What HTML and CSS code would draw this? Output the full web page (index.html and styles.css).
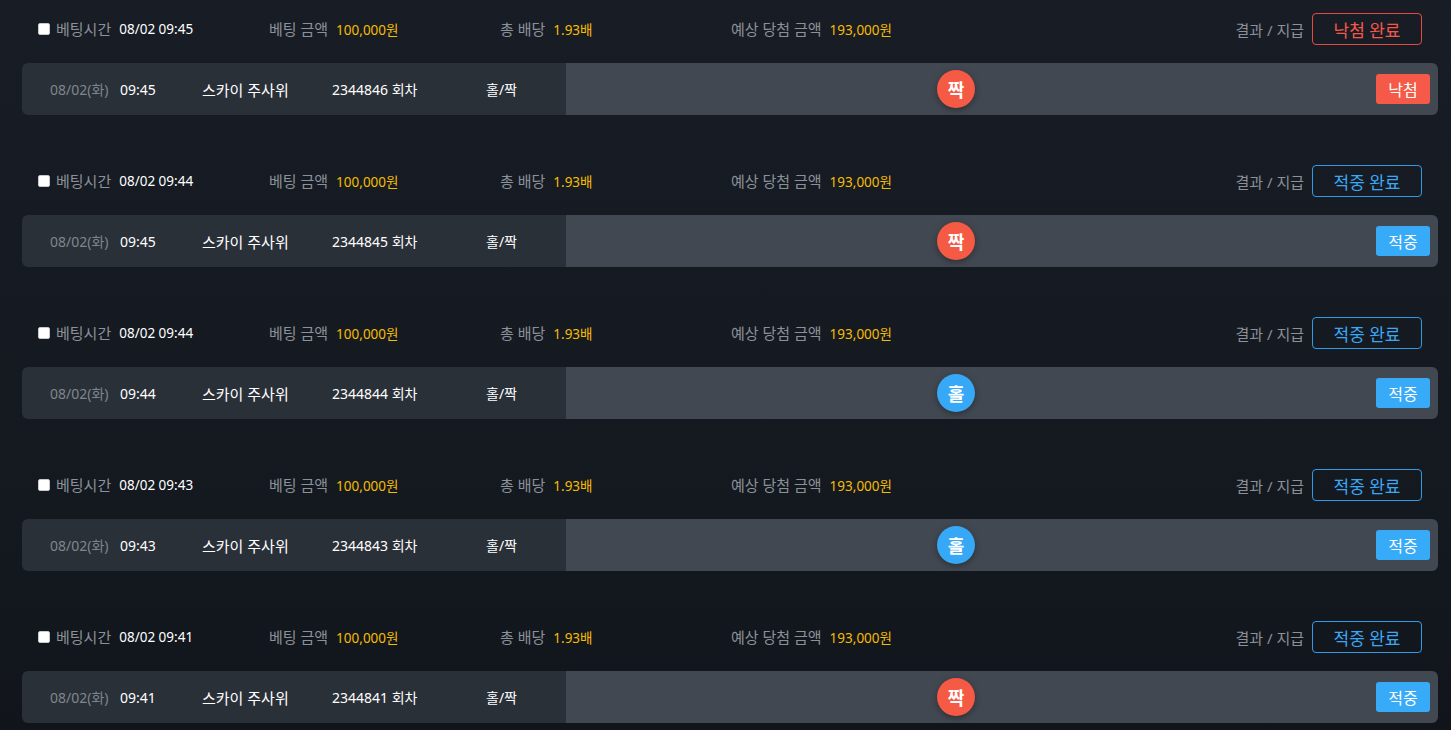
FILE: index.html
```html
<!DOCTYPE html>
<html lang="ko">
<head>
  <meta charset="UTF-8" />
  <meta name="viewport" content="width=device-width, initial-scale=1.0" />
  <title>베팅 내역</title>
  <link rel="stylesheet" href="styles.css" />
</head>
<body>

<main class="bet-list">

  <!-- 2344846 -->
  <section class="bet-item">
    <div class="bet-info">
      <div class="info-cell">
        <input type="checkbox" class="chk" />
        <span class="label">베팅시간</span>
        <span class="value">08/02 09:45</span>
      </div>
      <div class="info-cell">
        <span class="label">베팅 금액</span>
        <span class="value gold">100,000원</span>
      </div>
      <div class="info-cell">
        <span class="label">총 배당</span>
        <span class="value gold">1.93배</span>
      </div>
      <div class="info-cell">
        <span class="label">예상 당첨 금액</span>
        <span class="value gold">193,000원</span>
      </div>
      <div class="info-result">
        <span class="label">결과 / 지급</span>
        <button class="btn-outline lose">낙첨 완료</button>
      </div>
    </div>
    <div class="bet-card">
      <div class="card-left">
        <span class="c-date">08/02(화)</span>
        <span class="c-time">09:45</span>
        <span class="c-game">스카이 주사위</span>
        <span class="c-round">2344846 회차</span>
        <span class="c-type">홀/짝</span>
      </div>
      <div class="card-right">
        <div class="ball-wrap"><span class="ball even">짝</span></div>
        <div class="tag-wrap"><span class="tag lose">낙첨</span></div>
      </div>
    </div>
  </section>

  <!-- 2344845 -->
  <section class="bet-item">
    <div class="bet-info">
      <div class="info-cell">
        <input type="checkbox" class="chk" />
        <span class="label">베팅시간</span>
        <span class="value">08/02 09:44</span>
      </div>
      <div class="info-cell">
        <span class="label">베팅 금액</span>
        <span class="value gold">100,000원</span>
      </div>
      <div class="info-cell">
        <span class="label">총 배당</span>
        <span class="value gold">1.93배</span>
      </div>
      <div class="info-cell">
        <span class="label">예상 당첨 금액</span>
        <span class="value gold">193,000원</span>
      </div>
      <div class="info-result">
        <span class="label">결과 / 지급</span>
        <button class="btn-outline win">적중 완료</button>
      </div>
    </div>
    <div class="bet-card">
      <div class="card-left">
        <span class="c-date">08/02(화)</span>
        <span class="c-time">09:45</span>
        <span class="c-game">스카이 주사위</span>
        <span class="c-round">2344845 회차</span>
        <span class="c-type">홀/짝</span>
      </div>
      <div class="card-right">
        <div class="ball-wrap"><span class="ball even">짝</span></div>
        <div class="tag-wrap"><span class="tag win">적중</span></div>
      </div>
    </div>
  </section>

  <!-- 2344844 -->
  <section class="bet-item">
    <div class="bet-info">
      <div class="info-cell">
        <input type="checkbox" class="chk" />
        <span class="label">베팅시간</span>
        <span class="value">08/02 09:44</span>
      </div>
      <div class="info-cell">
        <span class="label">베팅 금액</span>
        <span class="value gold">100,000원</span>
      </div>
      <div class="info-cell">
        <span class="label">총 배당</span>
        <span class="value gold">1.93배</span>
      </div>
      <div class="info-cell">
        <span class="label">예상 당첨 금액</span>
        <span class="value gold">193,000원</span>
      </div>
      <div class="info-result">
        <span class="label">결과 / 지급</span>
        <button class="btn-outline win">적중 완료</button>
      </div>
    </div>
    <div class="bet-card">
      <div class="card-left">
        <span class="c-date">08/02(화)</span>
        <span class="c-time">09:44</span>
        <span class="c-game">스카이 주사위</span>
        <span class="c-round">2344844 회차</span>
        <span class="c-type">홀/짝</span>
      </div>
      <div class="card-right">
        <div class="ball-wrap"><span class="ball odd">홀</span></div>
        <div class="tag-wrap"><span class="tag win">적중</span></div>
      </div>
    </div>
  </section>

  <!-- 2344843 -->
  <section class="bet-item">
    <div class="bet-info">
      <div class="info-cell">
        <input type="checkbox" class="chk" />
        <span class="label">베팅시간</span>
        <span class="value">08/02 09:43</span>
      </div>
      <div class="info-cell">
        <span class="label">베팅 금액</span>
        <span class="value gold">100,000원</span>
      </div>
      <div class="info-cell">
        <span class="label">총 배당</span>
        <span class="value gold">1.93배</span>
      </div>
      <div class="info-cell">
        <span class="label">예상 당첨 금액</span>
        <span class="value gold">193,000원</span>
      </div>
      <div class="info-result">
        <span class="label">결과 / 지급</span>
        <button class="btn-outline win">적중 완료</button>
      </div>
    </div>
    <div class="bet-card">
      <div class="card-left">
        <span class="c-date">08/02(화)</span>
        <span class="c-time">09:43</span>
        <span class="c-game">스카이 주사위</span>
        <span class="c-round">2344843 회차</span>
        <span class="c-type">홀/짝</span>
      </div>
      <div class="card-right">
        <div class="ball-wrap"><span class="ball odd">홀</span></div>
        <div class="tag-wrap"><span class="tag win">적중</span></div>
      </div>
    </div>
  </section>

  <!-- 2344841 -->
  <section class="bet-item">
    <div class="bet-info">
      <div class="info-cell">
        <input type="checkbox" class="chk" />
        <span class="label">베팅시간</span>
        <span class="value">08/02 09:41</span>
      </div>
      <div class="info-cell">
        <span class="label">베팅 금액</span>
        <span class="value gold">100,000원</span>
      </div>
      <div class="info-cell">
        <span class="label">총 배당</span>
        <span class="value gold">1.93배</span>
      </div>
      <div class="info-cell">
        <span class="label">예상 당첨 금액</span>
        <span class="value gold">193,000원</span>
      </div>
      <div class="info-result">
        <span class="label">결과 / 지급</span>
        <button class="btn-outline win">적중 완료</button>
      </div>
    </div>
    <div class="bet-card">
      <div class="card-left">
        <span class="c-date">08/02(화)</span>
        <span class="c-time">09:41</span>
        <span class="c-game">스카이 주사위</span>
        <span class="c-round">2344841 회차</span>
        <span class="c-type">홀/짝</span>
      </div>
      <div class="card-right">
        <div class="ball-wrap"><span class="ball even">짝</span></div>
        <div class="tag-wrap"><span class="tag win">적중</span></div>
      </div>
    </div>
  </section>

</main>

</body>
</html>
```

FILE: styles.css
```css
/* Reset & Global */
* {
  box-sizing: border-box;
}
html, body {
  height: 100%;
}
body {
  margin: 0;
  font-family: "Noto Sans", "Noto Sans CJK KR", sans-serif;
  font-size: 14px;
  color: #ffffff;
  background: linear-gradient(180deg, #181d25 0%, #141920 70%, #11151b 100%);
  overflow: hidden;
}

/* List */
.bet-list {
  padding: 13px 13px 0 22px;
}
.bet-item {
  margin-bottom: 50px;
}

/* Info line */
.bet-info {
  display: flex;
  align-items: center;
  height: 32px;
  padding: 0 16px;
  margin-bottom: 18px;
}
.info-cell {
  display: flex;
  align-items: center;
  width: 231px;
  gap: 8px;
  white-space: nowrap;
  margin-top: -1px;
}
.chk {
  appearance: none;
  -webkit-appearance: none;
  width: 12px;
  height: 12px;
  margin: 0 -2px 0 0;
  background: #ffffff;
  border: 1px solid #c9c9c9;
  border-radius: 2px;
}
.label {
  font-size: 15px;
  color: #8b9199;
}
.value {
  font-size: 13.5px;
  color: #ffffff;
}
.value.gold {
  color: #f5bb00;
}
.info-result {
  margin-left: auto;
  display: flex;
  align-items: center;
  gap: 8px;
}
.btn-outline {
  width: 110px;
  height: 32px;
  padding: 0;
  background: transparent;
  border: 1px solid;
  border-radius: 4px;
  font-family: inherit;
  font-size: 17px;
  cursor: pointer;
}
.btn-outline.lose {
  color: #f5574a;
  border-color: #e24c3f;
}
.btn-outline.win {
  color: #3ba8f5;
  border-color: #3299e6;
}

/* Card */
.bet-card {
  display: flex;
  height: 52px;
  border-radius: 6px;
  overflow: hidden;
}
.card-left {
  display: flex;
  align-items: center;
  width: 544px;
  padding-left: 28px;
  background: #2a3038;
  white-space: nowrap;
}
.c-date {
  width: 70px;
  color: #80868e;
}
.c-time {
  width: 82px;
}
.c-game {
  width: 130px;
  font-size: 15px;
}
.c-round {
  width: 154px;
}
.card-right {
  flex: 1;
  display: flex;
  align-items: center;
  background: #424851;
}
.ball-wrap {
  flex: 1;
  display: flex;
  justify-content: center;
}
.ball {
  display: flex;
  align-items: center;
  justify-content: center;
  width: 38px;
  height: 38px;
  border-radius: 50%;
  font-size: 18px;
  font-weight: bold;
  color: #ffffff;
  box-shadow: 0 2px 6px rgba(0, 0, 0, 0.35);
}
.ball.even {
  background: #f55a45;
}
.ball.odd {
  background: #36a8f6;
}
.tag-wrap {
  width: 92px;
  padding: 0 8px 0 30px;
}
.tag {
  display: flex;
  align-items: center;
  justify-content: center;
  width: 54px;
  height: 30px;
  border-radius: 3px;
  font-size: 16px;
  color: #ffffff;
}
.tag.lose {
  background: #f55a48;
}
.tag.win {
  background: #37aaf8;
}
```
